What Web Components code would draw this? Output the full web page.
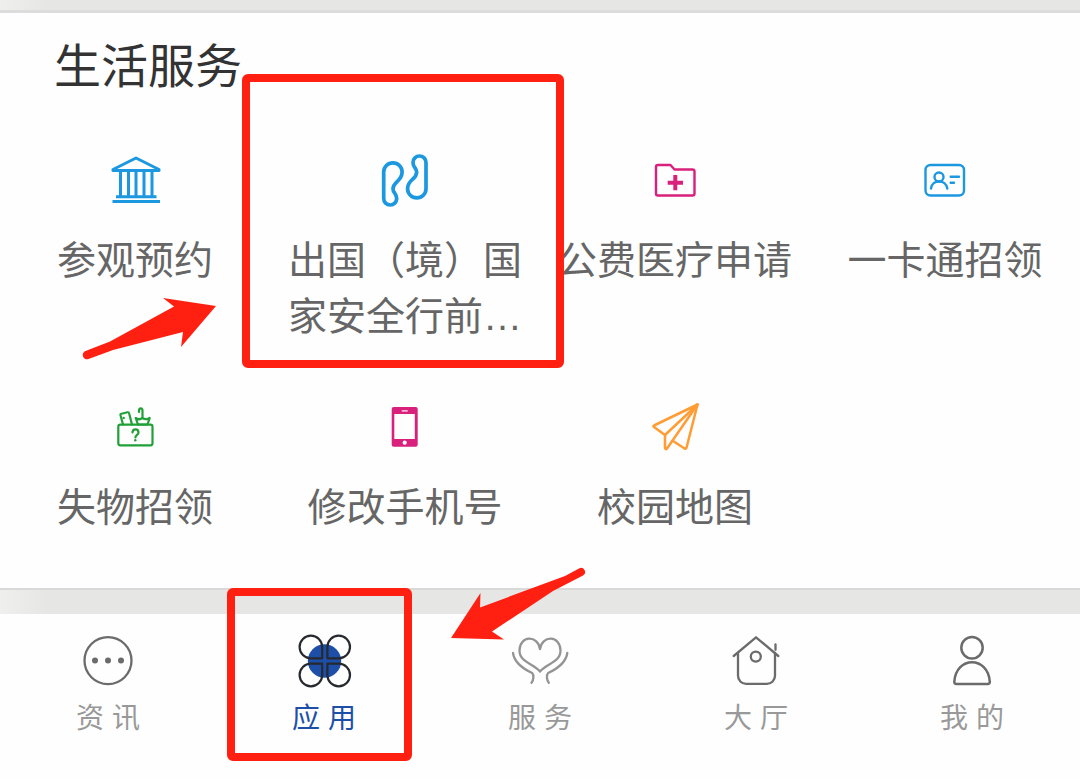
<!DOCTYPE html>
<html lang="zh-CN">
<head>
<meta charset="utf-8">
<meta name="viewport" content="width=device-width, initial-scale=1">
<title>生活服务</title>
<style>
    body {
        margin: 0;
        background: #fefefe;
        font-family: "Liberation Sans", "Noto Sans CJK SC", sans-serif;
        overflow-x: hidden;
    }
</style>
</head>
<body>
<campus-app></campus-app>

<script>
(function(){
    const define = (name, html) => {
        const template = document.createElement('template');
        template.innerHTML = html;

        window.customElements.define(name, class extends HTMLElement {
            constructor() {
                super();
                this.attachShadow({mode: 'open'});
                this.shadowRoot.appendChild(template.content.cloneNode(true));
            }

            connectedCallback() {
                const link = this.shadowRoot.querySelector('a');
                if (link && this.hasAttribute('href')) {
                    link.href = this.getAttribute('href');
                }
                if (link && this.hasAttribute('active')) {
                    link.setAttribute('aria-current', 'page');
                }
            }
        });
    };

    // grey band between blocks
    define('section-divider', `
        <style>
            :host {
                display: block;
                height: 24px;
                background: linear-gradient(to right, #efefee, #e6e6e5 48px);
                border-top: 2px solid #d9d9d9;
            }
            :host([top]) {
                height: 10px;
                border-top: 0;
                border-bottom: 3px solid #dcdcdc;
            }
        </style>
    `);

    // red outline laid over its parent
    define('mark-frame', `
        <style>
            :host {
                position: absolute;
                box-sizing: border-box;
                border: 8px solid #ff2012;
                border-radius: 6px;
                pointer-events: none;
                z-index: 1;
            }
        </style>
    `);

    define('mark-arrow', `
        <style>
            :host {
                position: absolute;
                color: #ff2012;
                pointer-events: none;
                z-index: 2;
            }
        </style>
        <slot></slot>
    `);

    define('service-section', `
        <style>
            :host {
                display: block;
                padding: 24px 0 52px;
            }
            h2 {
                margin: 0 0 53px 54px;
                color: #333;
                font-size: 47px;
                font-weight: 400;
                line-height: 60px;
            }
            .grid {
                display: grid;
                grid-template-columns: repeat(4, minmax(0, 1fr));
                row-gap: 52px;
            }
        </style>
        <h2><slot name="title"></slot></h2>
        <div class="grid"><slot></slot></div>
    `);

    define('service-item', `
        <style>
            :host {
                display: block;
                position: relative;
            }
            a {
                display: flex;
                flex-direction: column;
                align-items: center;
                gap: 23px;
                color: #666;
                text-decoration: none;
            }
            .icon {
                display: block;
                width: 60px;
                height: 60px;
            }
            .label {
                max-width: 234px;
                font-size: 39px;
                line-height: 56px;
            }
        </style>
        <a>
            <span class="icon"><slot name="icon"></slot></span>
            <span class="label"><slot></slot></span>
        </a>
        <slot name="mark"></slot>
    `);

    define('tab-bar', `
        <style>
            :host {
                display: block;
            }
            nav {
                display: grid;
                grid-template-columns: repeat(5, minmax(0, 1fr));
            }
        </style>
        <nav><slot></slot></nav>
    `);

    define('tab-item', `
        <style>
            :host {
                display: block;
                position: relative;
                color: #999;
            }
            :host([active]) {
                color: #1d4fa8;
            }
            a {
                display: flex;
                flex-direction: column;
                align-items: center;
                gap: 8px;
                padding: 17px 0 24px;
                color: inherit;
                text-decoration: none;
                font-size: 28px;
                line-height: 40px;
            }
            .icon {
                display: block;
                width: 60px;
                height: 60px;
            }
        </style>
        <a>
            <span class="icon"><slot name="icon"></slot></span>
            <span><slot></slot></span>
        </a>
        <slot name="mark"></slot>
    `);

    define('campus-app', `
        <style>
            :host {
                display: block;
            }
            svg {
                display: block;
                fill: none;
                stroke: currentColor;
                stroke-linecap: round;
                stroke-linejoin: round;
            }
            svg[slot="icon"] {
                width: 60px;
                height: 60px;
            }
            .blue { color: #1b98e0; }
            .pink { color: #d8207c; }
            .green { color: #21a038; }
            .orange { color: #ff9c33; }
            .grey { color: #6b6b6b; }
            .light { color: #949494; }
            .solid { fill: currentColor; stroke: none; }

            .frame-service { top: -76px; left: -28px; right: -24px; height: 294px; }
            .frame-tab { top: -26px; left: 11px; right: 20px; height: 173px; }
            .arrow-service { top: 140px; left: 80px; }
            .arrow-tab { top: -54px; left: 13px; }
        </style>

        <section-divider top></section-divider>

        <service-section>
            <span slot="title">生活服务</span>

            <service-item href="#visit">
                <svg slot="icon" class="blue" viewBox="0 0 60 60" stroke-width="3">
                    <path d="M8 19.5 31 8l23 11.5v1H8z"/>
                    <path d="M15.5 21v25M23.5 21v25M31 21v25M39 21v25M47 21v25" stroke-linecap="butt"/>
                    <path d="M11 46.7h40.5M7.5 51.5h47.5" stroke-linecap="butt"/>
                </svg>
                参观预约
                <mark-arrow slot="mark" class="arrow-service">
                    <svg width="140" height="80" viewBox="80 290 140 80">
                        <path class="solid" d="M216 306 163 298l11 8.5L110 341.500 85.500 351a4 4 0 0 0 3 8L113 350l70-18-2 15z"/>
                    </svg>
                </mark-arrow>
            </service-item>

            <service-item href="#safety">
                <svg slot="icon" class="blue" viewBox="0 0 60 60" stroke-width="3.7">
                    <path d="M8.7 22a9.200 9.200 0 0 1 18.400 0C27 32 18 31 18 39c0 4 3.700 4.500 3.700 9.500a6.500 6.500 0 0 1-13 0z"/>
                    <path d="M51 38.7a9.200 9.200 0 0 1-18.400 0C32.700 29 41.700 30 41.700 22c0-4-3.700-4.500-3.700-9.500a6.500 6.500 0 0 1 13 0z"/>
                </svg>
                出国（境）国家安全行前…
                <mark-frame slot="mark" class="frame-service"></mark-frame>
            </service-item>

            <service-item href="#medical">
                <svg slot="icon" class="pink" viewBox="0 0 60 60" stroke-width="2.4">
                    <path d="M13 15h12.500l4 4.500H47.500a2 2 0 0 1 2 2v22a2 2 0 0 1-2 2H13a2 2 0 0 1-2-2V17a2 2 0 0 1 2-2z"/>
                    <path d="M22.700 32.700h15.300M30.300 25v15.300" stroke-width="4" stroke-linecap="butt"/>
                </svg>
                公费医疗申请
            </service-item>

            <service-item href="#card">
                <svg slot="icon" class="blue" viewBox="0 0 60 60" stroke-width="2.4">
                    <rect x="10.500" y="15" width="38.500" height="30.500" rx="5"/>
                    <circle cx="24" cy="27" r="4.500"/>
                    <path d="M16 38.500c1-9.300 15-9.300 16.300 0M35.700 26.700H44M35.700 32.700h3.300"/>
                </svg>
                一卡通招领
            </service-item>

            <service-item href="#lost">
                <svg slot="icon" class="green" viewBox="0 0 60 60" stroke-width="2.2">
                    <rect x="13.300" y="27.700" width="34.200" height="20.600" rx="2"/>
                    <path d="M18 27.500 15.500 18.200q-.3-1.200 1-1.500l6-1.400q1.300-.3 1.600 1L27 27.500"/>
                    <circle class="solid" cx="18.700" cy="21" r="1.200"/>
                    <path d="M34 15v-1.200c0-3.300 3.500-3.300 3.500 0V21.500M33 27.500 30.700 21q3.300 2.500 6.800 0 3.500 2.500 7.200 0L42.500 27.500z"/>
                    <path d="M27.500 35.500c.2-4.200 6-4.200 6 0 0 2.400-3.100 2.300-3.100 5"/>
                    <circle class="solid" cx="30.300" cy="43.300" r="1.200"/>
                </svg>
                失物招领
            </service-item>

            <service-item href="#phone">
                <svg slot="icon" class="pink" viewBox="0 0 60 60">
                    <path class="solid" fill-rule="evenodd" d="M18.700 10h22a2 2 0 0 1 2 2v35.700a2 2 0 0 1-2 2h-22a2 2 0 0 1-2-2V12a2 2 0 0 1 2-2zM19.300 17v25h20.500V17z"/>
                    <path d="M27.500 13.900h4.500" stroke="#f3b5d3" stroke-width="1.8"/>
                    <circle cx="29.700" cy="45.700" r="2.100" fill="#fff" stroke="none"/>
                </svg>
                修改手机号
            </service-item>

            <service-item href="#map">
                <svg slot="icon" class="orange" viewBox="0 0 60 60" stroke-width="2.5">
                    <path d="M52.500 7.500 9 28.500q-1.200.7 0 1.500L20 38z"/>
                    <path d="M20 38v13q.5 2 2 .5L52.500 7.500"/>
                    <path d="M27.700 43.700 39.500 51.500q1.500.7 2-.8L52.500 7.500"/>
                </svg>
                校园地图
            </service-item>
        </service-section>

        <section-divider></section-divider>

        <tab-bar>
            <tab-item href="#news">
                <svg slot="icon" class="grey" viewBox="0 0 60 60" stroke-width="2.3">
                    <circle cx="30" cy="29.600" r="23.500"/>
                    <g class="solid">
                        <circle cx="17" cy="29.600" r="3"/>
                        <circle cx="30" cy="29.600" r="3"/>
                        <circle cx="43" cy="29.600" r="3"/>
                    </g>
                </svg>
                资 讯
            </tab-item>

            <tab-item href="#apps" active>
                <svg slot="icon" viewBox="0 0 60 60" stroke-width="2.2">
                    <circle cx="30.500" cy="30" r="16.700" class="solid"/>
                    <g stroke="#26292e">
                        <path d="M28.200 27.300H16.900a11.300 11.300 0 1 1 11.300-11.300z"/>
                        <path d="M33.400 27.300h11.300a11.300 11.300 0 1 0-11.300-11.300z"/>
                        <path d="M28.200 32.700H16.900a11.300 11.300 0 1 0 11.300 11.300z"/>
                        <path d="M33.400 32.700h11.300a11.300 11.300 0 1 1-11.300 11.300z"/>
                    </g>
                </svg>
                应 用
                <mark-frame slot="mark" class="frame-tab"></mark-frame>
            </tab-item>

            <tab-item href="#service">
                <svg slot="icon" class="light" viewBox="0 0 60 60" stroke-width="2.3">
                    <path d="M30 18C28 3.500 9.500 4.500 9.500 19.500c0 12 14.500 13 20.500 21 6-8 20.500-9 20.500-21C50.500 4.500 32 3.500 30 18z"/>
                    <path d="M3 22c1.300 9.500 9.500 15.500 19.200 20 1.800 2 1.500 7-.7 9.800M57.300 22c-1.300 9.500-9.500 15.500-19.200 20-1.800 2-1.500 7 .7 9.800"/>
                </svg>
                服 务
                <mark-arrow slot="mark" class="arrow-tab">
                    <svg width="145" height="90" viewBox="445 560 145 90">
                        <path class="solid" d="M451 638 480.500 593l-.5 14.500L565 576l14-7.500a4 4 0 0 1 4 7L553 591 492 631.500 504 639.500z"/>
                    </svg>
                </mark-arrow>
            </tab-item>

            <tab-item href="#hall">
                <svg slot="icon" class="grey" viewBox="0 0 60 60" stroke-width="2.3">
                    <path d="M7.700 25 30 6.300l22.300 18.700"/>
                    <path d="M12 21.800V44.800a8 8 0 0 0 8 8h21a8 8 0 0 0 8-8V21.800M49.500 13.300v5.500"/>
                    <circle cx="29.800" cy="25.600" r="5"/>
                </svg>
                大 厅
            </tab-item>

            <tab-item href="#mine">
                <svg slot="icon" class="grey" viewBox="0 0 60 60" stroke-width="2.5">
                    <circle cx="30" cy="16.800" r="10.700"/>
                    <path d="M12.300 50.800C14 24.800 46 24.800 47.800 50.800q0 2.200-2 2.200H14.300q-2 0-2-2.200z"/>
                </svg>
                我 的
            </tab-item>
        </tab-bar>
    `);
})();
</script>
</body>
</html>
